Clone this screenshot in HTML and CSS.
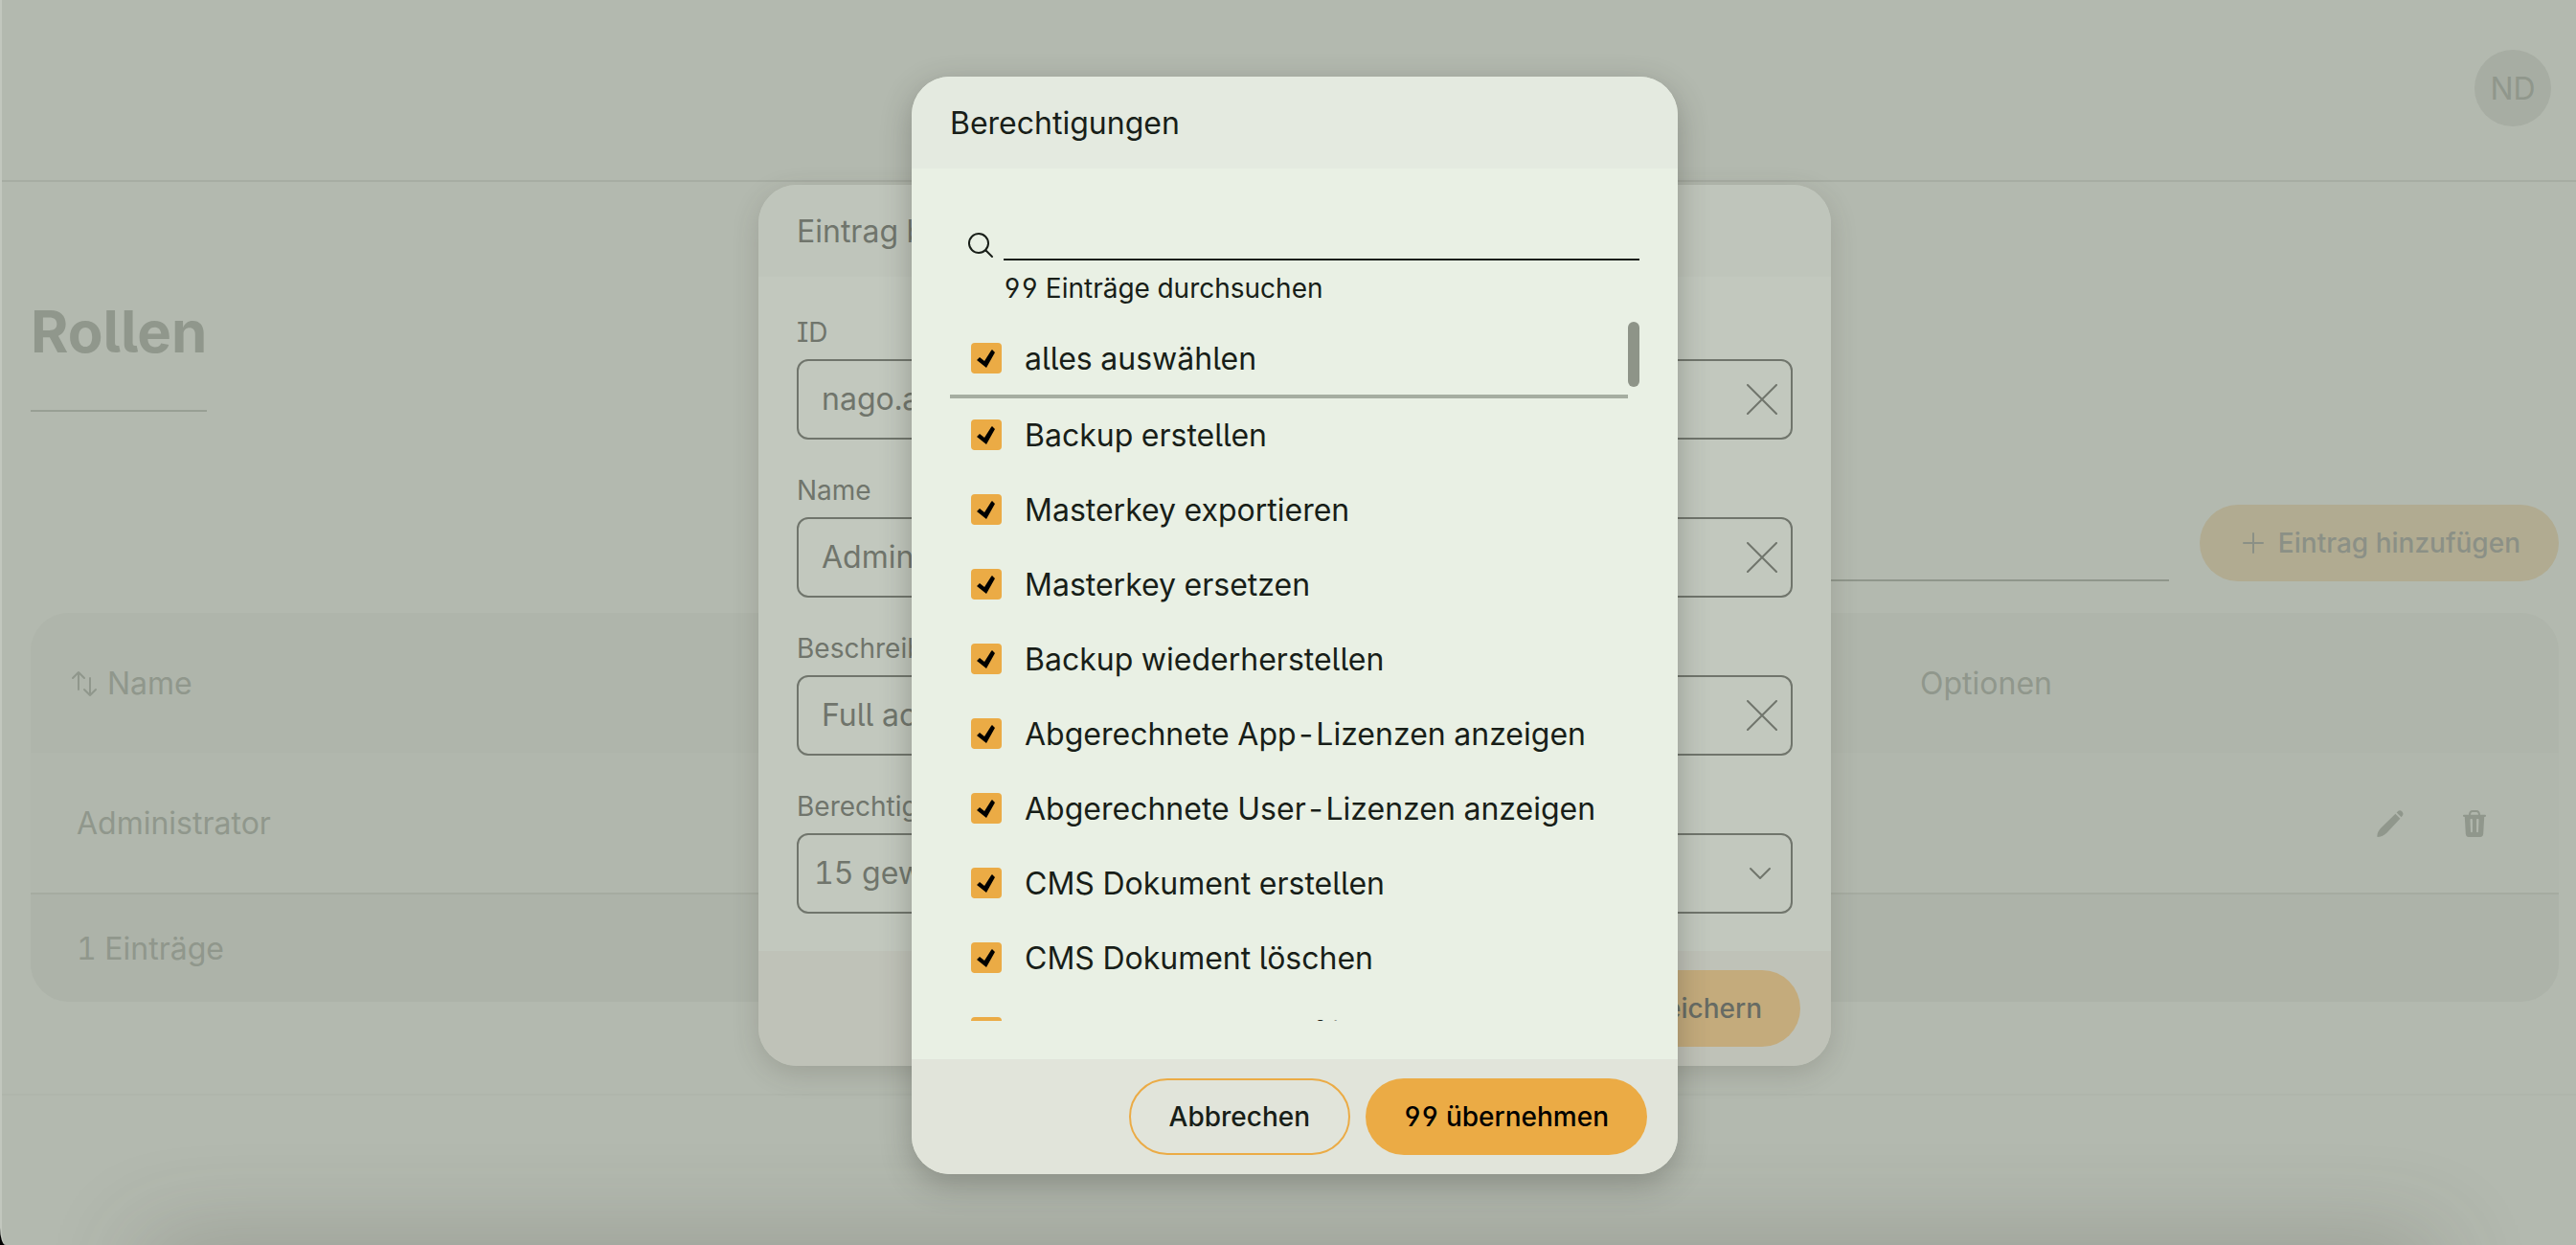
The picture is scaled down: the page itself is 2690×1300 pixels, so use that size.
FILE: index.html
```html
<!DOCTYPE html>
<html lang="de">
<head>
<meta charset="utf-8">
<title>Rollen</title>
<link rel="stylesheet" href="styles.css">
</head>
<body>
<div class="page">
  <header class="topbar"><button class="avatar" type="button">ND</button></header>
  <main class="content">
    <h1 class="title">Rollen</h1>
    <div class="toolbar">
      <input class="table-search" type="search" aria-label="Rollen durchsuchen">
      <button class="button button--add" type="button">
        <svg width="24" height="24" viewBox="0 0 24 24" fill="none" stroke="currentColor" stroke-width="2" stroke-linecap="round"><path d="M12 2v20M2 12h20"/></svg>
        Eintrag hinzufügen
      </button>
    </div>
    <table class="table">
      <thead>
        <tr>
          <th class="col-name"><span class="sort"><svg width="28" height="28" viewBox="0 0 28 28" fill="none" stroke="currentColor" stroke-width="2" stroke-linecap="round" stroke-linejoin="round"><path d="M8 20V2M2 8l6-6 6 6M20 8v18M14 20l6 6 6-6"/></svg>Name</span></th>
          <th class="col-options">Optionen</th>
        </tr>
      </thead>
      <tbody>
        <tr>
          <td>Administrator</td>
          <td>
            <div class="actions">
              <button class="icon-button" type="button" aria-label="Bearbeiten"><svg width="28" height="28" viewBox="0 0 28 28" fill="currentColor"><path d="M19.4 3.8l5 5L10.600 23.400C7.500 26.400 3.500 28 .5 28c-.6-3 1.200-7 4.400-10z"/><path d="M20.700 2.500l1.200-1.200c1.400-1.500 3.200-1.200 4.500.1s1.600 3.100.2 4.500l-1.100 1.300z"/></svg></button>
              <button class="icon-button" type="button" aria-label="Löschen"><svg width="28" height="28" viewBox="0 0 28 28" fill="currentColor" fill-rule="evenodd"><path d="M8 4.800C8 2 9.500 0 12 0h4c2.500 0 4 2 4 4.800h5c1.400 0 1.400 2.200 0 2.200h-.8l-1 17.600c-.1 2-1.200 3.400-3.200 3.400H8c-2 0-3.100-1.400-3.200-3.400L3.800 7H3C1.600 7 1.600 4.800 3 4.800zm2 0h8c0-1.700-.8-2.800-2-2.800h-4c-1.200 0-2 1.100-2 2.800zM9.500 10l.5 12.500c.1 1 1.900 1 1.900 0V10c0-1.300-2.400-1.300-2.400 0zm6.600 0v12.500c0 1 1.800 1 1.900 0l.5-12.500c0-1.300-2.400-1.300-2.400 0z"/></svg></button>
            </div>
          </td>
        </tr>
      </tbody>
      <tfoot><tr><td colspan="2">1 Einträge</td></tr></tfoot>
    </table>
  </main>
  <footer class="page-footer"></footer>
  <div class="dock-shade"></div>
</div>

<div class="overlay">
  <form class="dialog dialog--edit">
    <h2 class="dialog-head">Eintrag bearbeiten</h2>
    <div class="fields">
      <div class="field">
        <label for="role-id">ID</label>
        <div class="box"><input id="role-id" type="text" value="nago.admin"><button class="clear" type="button" aria-label="ID leeren"><svg width="32" height="32" viewBox="0 0 32 32" stroke="currentColor" stroke-width="2" stroke-linecap="round"><path d="M1 1l30 30M31 1L1 31"/></svg></button></div>
      </div>
      <div class="field">
        <label for="role-name">Name</label>
        <div class="box"><input id="role-name" type="text" value="Administrator"><button class="clear" type="button" aria-label="Name leeren"><svg width="32" height="32" viewBox="0 0 32 32" stroke="currentColor" stroke-width="2" stroke-linecap="round"><path d="M1 1l30 30M31 1L1 31"/></svg></button></div>
      </div>
      <div class="field">
        <label for="role-text">Beschreibung</label>
        <div class="box"><input id="role-text" type="text" value="Full access"><button class="clear" type="button" aria-label="Beschreibung leeren"><svg width="32" height="32" viewBox="0 0 32 32" stroke="currentColor" stroke-width="2" stroke-linecap="round"><path d="M1 1l30 30M31 1L1 31"/></svg></button></div>
      </div>
      <div class="field">
        <label for="role-rights">Berechtigungen</label>
        <div class="box box--select"><select id="role-rights"><option>15 gewählt</option></select><svg width="24" height="24" viewBox="0 0 24 24" fill="none" stroke="currentColor" stroke-width="2" stroke-linecap="round" stroke-linejoin="round"><path d="M2 7l10 10L22 7"/></svg></div>
      </div>
    </div>
    <div class="dialog-foot">
      <button class="button button--outline" type="button">Abbrechen</button>
      <button class="button button--save" type="submit">Speichern</button>
    </div>
  </form>
</div>

<div class="overlay">
  <form class="dialog dialog--rights">
    <h2 class="dialog-head">Berechtigungen</h2>
    <div class="picker">
      <div class="search">
        <svg width="32" height="32" viewBox="0 0 32 32" fill="none" stroke="currentColor" stroke-width="2" stroke-linecap="round"><circle cx="14" cy="14" r="10"/><path d="M21.500 21.500l6.500 6.500"/></svg>
        <input id="search" type="text">
        <label for="search">99 Einträge durchsuchen</label>
      </div>
      <div class="scroller">
        <div class="options">
          <label class="option option--all"><input type="checkbox" checked>alles auswählen</label>
          <label class="option"><input type="checkbox" checked>Backup erstellen</label>
          <label class="option"><input type="checkbox" checked>Masterkey exportieren</label>
          <label class="option"><input type="checkbox" checked>Masterkey ersetzen</label>
          <label class="option"><input type="checkbox" checked>Backup wiederherstellen</label>
          <label class="option"><input type="checkbox" checked>Abgerechnete App-Lizenzen anzeigen</label>
          <label class="option"><input type="checkbox" checked>Abgerechnete User-Lizenzen anzeigen</label>
          <label class="option"><input type="checkbox" checked>CMS Dokument erstellen</label>
          <label class="option"><input type="checkbox" checked>CMS Dokument löschen</label>
          <label class="option"><input type="checkbox" checked>CMS Dokumente auflisten</label>
        </div>
        <div class="track"><div class="thumb"></div></div>
      </div>
    </div>
    <div class="dialog-foot">
      <button class="button button--outline" type="button">Abbrechen</button>
      <button class="button button--primary" type="submit">99 übernehmen</button>
    </div>
  </form>
</div>
</body>
</html>
```
FILE: styles.css
```css
* { box-sizing: border-box; }

html { background: #000; }

body {
  margin: 0;
  height: 100vh;
  overflow: hidden;
  font: 32px/40px Inter, "Liberation Sans", sans-serif;
  font-feature-settings: "ss02", "cv03", "cv04", "tnum";
}

h1, h2 { margin: 0; }

svg { display: block; flex: none; }

input, select, button {
  margin: 0;
  padding: 0;
  border: 0;
  background: none;
  color: inherit;
  font: inherit;
  font-feature-settings: inherit;
  outline: none;
  appearance: none;
}

/* Page behind the dialogs */
.page {
  position: relative;
  height: 100vh;
  overflow: hidden;
  border-left: 2px solid #c2c7be;
  border-bottom-left-radius: 6px 18px;
  background: #b3b9af;
  color: #90978c;
}

.topbar {
  display: flex;
  justify-content: flex-end;
  height: 190px;
  padding: 52px 26px 0;
  border-bottom: 2px solid #a7ada3;
}

.avatar {
  width: 80px;
  height: 80px;
  padding-top: 2px;
  border-radius: 50%;
  background: #a7ada3;
}

.content { padding: 116px 18px 96px 30px; }

.title {
  width: fit-content;
  padding-bottom: 42px;
  border-bottom: 2px solid #989f94;
  font-size: 60px;
  line-height: 80px;
  font-weight: 700;
}

.toolbar {
  display: flex;
  justify-content: flex-end;
  gap: 32px;
  margin: 97px 0 33px;
}

.table-search {
  width: 900px;
  border-bottom: 2px solid #8f968b;
}

.button {
  display: flex;
  align-items: center;
  height: 80px;
  padding: 0 40px;
  border-radius: 40px;
  font-size: 28px;
  font-weight: 500;
}

.button--add {
  gap: 14px;
  padding-left: 44px;
  background: #b1ab91;
  color: #8b9086;
}

.table {
  width: 100%;
  border-collapse: separate;
  border-spacing: 0;
  border-radius: 40px;
  overflow: hidden;
  background: #b1b7ad;
}

.table th, .table td {
  height: 146px;
  padding: 2px 48px 0;
  font-weight: 400;
  text-align: left;
}

.table th { background: #afb5ab; }
.table .col-name { padding-left: 42px; }
.table .col-options { width: 715px; }

.sort {
  display: flex;
  align-items: center;
  gap: 10px;
}

.actions {
  display: flex;
  justify-content: flex-end;
}

.icon-button {
  display: flex;
  justify-content: center;
  width: 88px;
}

.table tfoot td {
  height: 114px;
  border-top: 2px solid #a5aba0;
  background: #adb3a9;
}

.table tbody td:last-child { padding-right: 44px; }

.page-footer { border-top: 2px solid #afb5ab; }

.dock-shade {
  position: absolute;
  left: 160px;
  right: 160px;
  bottom: -60px;
  height: 50px;
  box-shadow: 0 0 100px 10px rgba(70, 65, 60, .3);
}

/* Dialogs */
.overlay {
  position: absolute;
  inset: 0;
  display: grid;
  place-content: center;
  padding: 6px 0 0 14px;
}

.dialog {
  display: flex;
  flex-direction: column;
  max-width: 96vw;
  border-radius: 40px;
  overflow: hidden;
}

.dialog-head {
  padding: 29px 40px 27px;
  font-size: 32px;
  line-height: 40px;
  font-weight: 400;
}

.dialog-foot {
  display: flex;
  justify-content: flex-end;
  gap: 16px;
  padding: 20px 32px;
}

.dialog--edit {
  width: 1120px;
  background: #c2c8be;
  color: #70756c;
  box-shadow: 0 8px 28px rgba(60, 55, 45, .18);
}

.dialog--edit .dialog-head { background: #bfc5bb; }
.dialog--edit .dialog-foot { background: #bfc2b8; }
.button--save { background: #c4ab7c; color: #676b64; }

.fields {
  display: grid;
  gap: 33px;
  padding: 38px 40px 39px;
}

.field label {
  display: block;
  margin-bottom: 8px;
  font-size: 28px;
}

.box {
  display: flex;
  align-items: center;
  height: 84px;
  padding: 0 14px 0 24px;
  border: 2px solid #70756c;
  border-radius: 12px;
}

.box input, .box select { flex: 1; min-width: 0; }
.box--select { padding: 0 20px 0 16px; }

.dialog--rights {
  width: 800px;
  background: #e9f0e4;
  color: #181e18;
  box-shadow: 0 10px 32px rgba(50, 50, 45, .32);
}

.dialog--rights .dialog-head { background: #e4eae0; }
.dialog--rights .dialog-foot { background: #e1e4da; }

.button--outline { border: 2px solid #ebab45; }
.dialog--edit .button--outline { border-color: #c4ab7c; }
.button--primary { background: #ebab45; color: #000; }

.picker { padding: 40px; }

.search {
  display: grid;
  grid-template-columns: 48px 1fr;
  gap: 9px 8px;
  margin-bottom: 15px;
}

.search svg { place-self: end; }

.search input {
  height: 56px;
  min-width: 0;
  border-bottom: 2px solid #181e18;
}

.search label {
  grid-column: 2;
  font-size: 28px;
}

.scroller {
  display: flex;
  height: 730px;
}

.options {
  flex: 1;
  overflow: hidden;
}

.option {
  display: flex;
  align-items: center;
  gap: 24px;
  height: 78px;
  padding-left: 22px;
  white-space: nowrap;
}

.option--all {
  height: 80px;
  padding-top: 2px;
  border-bottom: 4px solid #a6aea1;
}

.option input {
  width: 32px;
  height: 32px;
  margin-bottom: 2px;
  border-radius: 4px;
  background: #ebab45;
}

.option input:checked::before {
  content: "";
  display: block;
  height: 32px;
  background: #000;
  clip-path: polygon(6px 18px, 9px 15px, 14px 19px, 21px 8px, 22px 7px, 25px 10px, 16px 26px);
}

.track { width: 12px; }

.thumb {
  height: 68px;
  border-radius: 6px;
  background: #8e9488;
}
```
